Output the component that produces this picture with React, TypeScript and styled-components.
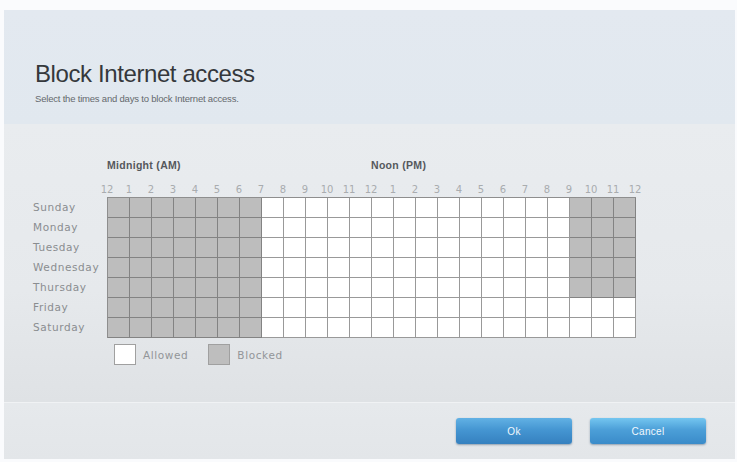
import styled, { createGlobalStyle } from 'styled-components';

const GlobalStyle = createGlobalStyle`
  html, body {
    margin: 0;
    padding: 0;
    background: #fafbfd;
  }
`;

const days = ['Sunday', 'Monday', 'Tuesday', 'Wednesday', 'Thursday', 'Friday', 'Saturday'];
const hourLabels = [12, 1, 2, 3, 4, 5, 6, 7, 8, 9, 10, 11, 12, 1, 2, 3, 4, 5, 6, 7, 8, 9, 10, 11, 12];

// blocked: midnight-7am every day, 9pm-midnight Sun..Thu
const isBlocked = (day: number, hour: number): boolean =>
  hour < 7 || (hour >= 21 && day <= 4);

const CELL_W = 22;
const CELL_H = 20;

const Page = styled.div`
  padding: 10px 2px 3px 4px;
  font-family: 'Liberation Sans', Arial, sans-serif;
`;

const Panel = styled.div`
  display: flex;
  flex-direction: column;
`;

const Header = styled.div`
  height: 114px;
  box-sizing: border-box;
  padding: 50px 0 0 31px;
  background: linear-gradient(180deg, #e3e9f0 0%, #e1e8ef 100%);
`;

const Title = styled.h1`
  margin: 0;
  font-size: 24px;
  line-height: 28px;
  font-weight: normal;
  letter-spacing: -0.4px;
  color: #35383c;
`;

const Subtitle = styled.p`
  margin: 5px 0 0;
  font-size: 9.5px;
  line-height: 12px;
  letter-spacing: -0.2px;
  color: #65696e;
`;

const Body = styled.div`
  height: 278px;
  box-sizing: border-box;
  padding: 35px 0 0 29px;
  background: linear-gradient(180deg, #e9ecef 0%, #e6e9ec 60%, #dfe2e5 100%);
`;

const PeriodRow = styled.div`
  display: flex;
  margin-left: 74px;
  height: 12px;
  margin-bottom: 13px;
`;

const Period = styled.span<{ $width: number }>`
  width: ${(p) => p.$width}px;
  font-size: 10.5px;
  line-height: 12px;
  font-weight: bold;
  letter-spacing: 0.3px;
  color: #55585c;
`;

const HourRow = styled.div`
  display: flex;
  margin-left: ${74 - CELL_W / 2}px;
  height: 13px;
`;

const HourLabel = styled.span`
  width: ${CELL_W}px;
  text-align: center;
  font-family: 'DejaVu Sans', sans-serif;
  font-size: 10px;
  line-height: 12px;
  color: #a9acaf;
`;

const Schedule = styled.div`
  display: flex;
`;

const DayColumn = styled.div`
  width: 74px;
  display: flex;
  flex-direction: column;
`;

const DayLabel = styled.div`
  height: ${CELL_H}px;
  line-height: ${CELL_H}px;
  font-family: 'DejaVu Sans', sans-serif;
  font-size: 10.5px;
  letter-spacing: 0.6px;
  color: #8a8d90;
  white-space: nowrap;
`;

const Grid = styled.div`
  display: grid;
  grid-template-columns: repeat(24, ${CELL_W}px);
  grid-auto-rows: ${CELL_H}px;
  border-top: 1px solid #8e8e8e;
  border-left: 1px solid #8e8e8e;
`;

const Cell = styled.div<{ $blocked: boolean }>`
  box-sizing: border-box;
  background: ${(p) => (p.$blocked ? '#bdbdbd' : '#ffffff')};
  border-right: 1px solid ${(p) => (p.$blocked ? '#838383' : '#999999')};
  border-bottom: 1px solid ${(p) => (p.$blocked ? '#838383' : '#999999')};
`;

const Legend = styled.div`
  display: flex;
  align-items: center;
  margin: 6px 0 0 81px;
`;

const Swatch = styled.span<{ $blocked: boolean }>`
  width: 22px;
  height: 21px;
  box-sizing: border-box;
  border: 1px solid #a0a0a0;
  background: ${(p) => (p.$blocked ? '#bebebe' : '#ffffff')};
  margin-right: 7px;
`;

const LegendText = styled.span`
  font-family: 'DejaVu Sans', sans-serif;
  font-size: 10.5px;
  letter-spacing: 0.6px;
  color: #929598;
  margin-right: 20px;
`;

const Footer = styled.div`
  height: 57px;
  box-sizing: border-box;
  border-top: 1px solid #f0f2f4;
  background: linear-gradient(180deg, #e6e9ec 0%, #e3e6e9 100%);
  display: flex;
  justify-content: flex-end;
  align-items: flex-start;
  gap: 18px;
  padding: 15px 29px 0 0;
`;

const Button = styled.button<{ $light?: boolean }>`
  width: 116px;
  height: 26px;
  border: none;
  border-radius: 3px;
  background: ${(p) =>
    p.$light
      ? 'linear-gradient(180deg, #74c6f0 0%, #4c9fd8 45%, #3a8bc9 100%)'
      : 'linear-gradient(180deg, #62b1e4 0%, #4596d2 45%, #3580bf 100%)'};
  box-shadow: 0 1px 2px rgba(40, 70, 100, 0.45);
  color: #f2f8fd;
  font-family: 'Liberation Sans', Arial, sans-serif;
  font-size: 10px;
  letter-spacing: 0.3px;
  cursor: pointer;
`;

export default function App() {
  return (
    <Page>
      <GlobalStyle />
      <Panel>
        <Header>
          <Title>Block Internet access</Title>
          <Subtitle>Select the times and days to block Internet access.</Subtitle>
        </Header>
        <Body>
          <PeriodRow>
            <Period $width={CELL_W * 12}>Midnight (AM)</Period>
            <Period $width={CELL_W * 12}>Noon (PM)</Period>
          </PeriodRow>
          <HourRow>
            {hourLabels.map((h, i) => (
              <HourLabel key={i}>{h}</HourLabel>
            ))}
          </HourRow>
          <Schedule>
            <DayColumn>
              {days.map((d) => (
                <DayLabel key={d}>{d}</DayLabel>
              ))}
            </DayColumn>
            <Grid>
              {days.map((d, di) =>
                Array.from({ length: 24 }, (_, h) => (
                  <Cell key={`${d}-${h}`} $blocked={isBlocked(di, h)} />
                ))
              )}
            </Grid>
          </Schedule>
          <Legend>
            <Swatch $blocked={false} />
            <LegendText>Allowed</LegendText>
            <Swatch $blocked />
            <LegendText>Blocked</LegendText>
          </Legend>
        </Body>
        <Footer>
          <Button>Ok</Button>
          <Button $light>Cancel</Button>
        </Footer>
      </Panel>
    </Page>
  );
}
